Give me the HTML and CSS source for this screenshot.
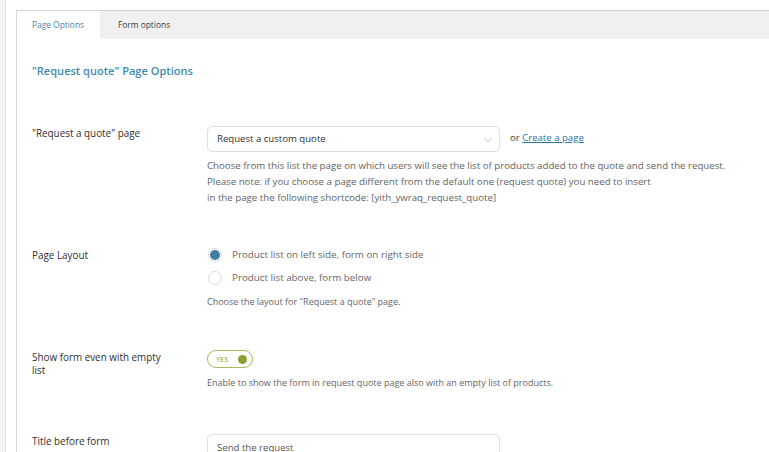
FILE: index.html
```html
<!DOCTYPE html>
<html>
<head>
<meta charset="utf-8">
<link rel="stylesheet" href="styles.css">
</head>
<body>
<div class="page">
  <div class="edge"></div>
  <div class="wrap">
    <div class="panel">
      <div class="tabs">
        <div class="tab active">Page Options</div>
        <div class="tab">Form options</div>
      </div>
      <div class="content">
        <h2 class="title">"Request quote" Page Options</h2>

        <div class="row row-select">
          <div class="label">"Request a quote" page</div>
          <div class="field">
            <div class="inline">
              <div class="select">
                <span>Request a custom quote</span>
                <svg class="chev" width="10" height="6" viewBox="0 0 10 6"><path d="M1 1 L5 5 L9 1" fill="none" stroke="#c8c8c8" stroke-width="1"/></svg>
              </div>
              <span class="or">or <a href="#">Create a page</a></span>
            </div>
            <p class="desc">Choose from this list the page on which users will see the list of products added to the quote and send the request.<br>Please note: if you choose a page different from the default one (request quote) you need to insert<br>in the page the following shortcode: [yith_ywraq_request_quote]</p>
          </div>
        </div>

        <div class="row row-layout">
          <div class="label">Page Layout</div>
          <div class="field">
            <div class="radio-item"><span class="radio checked"></span><span>Product list on left side, form on right side</span></div>
            <div class="radio-item"><span class="radio"></span><span>Product list above, form below</span></div>
            <p class="desc small">Choose the layout for "Request a quote" page.</p>
          </div>
        </div>

        <div class="row row-toggle">
          <div class="label narrow">Show form even with empty list</div>
          <div class="field">
            <div class="toggle"><span class="yes">YES</span><span class="knob"></span></div>
            <p class="desc small toggle-desc">Enable to show the form in request quote page also with an empty list of products.</p>
          </div>
        </div>

        <div class="row row-input">
          <div class="label">Title before form</div>
          <div class="field">
            <div class="input">Send the request</div>
          </div>
        </div>
      </div>
    </div>
  </div>
</div>
</body>
</html>
```

FILE: styles.css
```css
html, body {
  margin: 0;
  padding: 0;
  background: #ffffff;
  overflow: hidden;
}
body {
  font-family: "Open Sans", "Noto Sans", sans-serif;
  color: #3c3c3c;
  width: 769px;
  height: 452px;
}
.page {
  display: flex;
  height: 452px;
  overflow: hidden;
}
.edge {
  width: 5px;
  flex: none;
  background: #f5f5f5;
  border-right: 1px solid #e3e3e3;
}
.wrap {
  flex: 1;
  padding: 10px 0 0 10px;
  min-width: 0;
  overflow: hidden;
}
.panel {
  width: 820px;
  border-top: 1px solid #d2d2d2;
  border-left: 1px solid #d9d9d9;
  background: #fff;
}
.tabs {
  display: flex;
  background: #f0f0f0;
  height: 28px;
}
.tab {
  font-size: 8.4px;
  padding: 0 15px;
  line-height: 28px;
  color: #3a3a3a;
}
.tab.active {
  background: #fff;
  color: #4a86a8;
  width: 53px;
  margin-right: 3px;
}
.content {
  padding: 0 0 0 15px;
}
.title {
  margin: 23px 0 0 0;
  font-size: 11.05px;
  font-weight: 600;
  color: #3f8bae;
  line-height: 18px;
}
.row {
  display: flex;
}
.label {
  width: 175px;
  flex: none;
  font-size: 9.9px;
  color: #2f2f2f;
}
.label.narrow {
  width: 140px;
  margin-right: 35px;
  line-height: 13px;
}
.field {
  flex: 1;
}
.row-select {
  margin-top: 46px;
}
.inline {
  display: flex;
  align-items: center;
}
.select {
  width: 276px;
  height: 24px;
  border: 1px solid #dedede;
  border-radius: 5px;
  display: flex;
  align-items: center;
  justify-content: space-between;
  padding: 0 6px 0 9px;
  font-size: 9.6px;
  color: #333;
}
.select span { line-height: 24px; }
.chev { margin-top: 2px; }
.or {
  margin-left: 10px;
  margin-top: -3px;
  font-size: 9.6px;
  color: #444;
}
.or a {
  color: #2a74a8;
  text-decoration: underline;
}
.desc {
  margin: 6px 0 0 0;
  font-size: 9.7px;
  line-height: 16px;
  color: #646464;
}
.desc.small {
  font-size: 9px;
  margin-top: 5px;
}
.desc.toggle-desc {
  margin-top: 7px;
}
.row-layout {
  margin-top: 37px;
}
.row-layout .label { padding-top: 5px; }
.radio-item {
  display: flex;
  align-items: center;
  height: 23px;
  font-size: 9.8px;
  color: #666;
}
.radio {
  width: 14px;
  height: 14px;
  border: 1px solid #dcdcdc;
  border-radius: 50%;
  margin: 0 10px 0 1px;
  box-sizing: border-box;
  background: #fff;
  display: flex;
  align-items: center;
  justify-content: center;
}
.radio.checked::after {
  content: "";
  width: 10px;
  height: 10px;
  border-radius: 50%;
  background: #3e7fa3;
}
.row-toggle {
  margin-top: 39px;
}
.row-toggle .label { padding-top: 2px; }
.toggle {
  height: 16px;
  border: 1px solid #a9b85e;
  border-radius: 10px;
  display: flex;
  align-items: center;
  justify-content: space-between;
  padding: 0 5px 0 8px;
  width: 31px;
  margin-top: 1px;
}
.yes {
  font-size: 7px;
  color: #86934a;
  letter-spacing: 0.2px;
}
.knob {
  width: 9px;
  height: 9px;
  border-radius: 50%;
  background: #86a135;
}
.row-input {
  margin-top: 43px;
}
.input {
  width: 282px;
  height: 26px;
  border: 1px solid #dedede;
  border-radius: 5px;
  padding: 0 0 0 9px;
  font-size: 9.6px;
  line-height: 26px;
  color: #555;
  margin-top: 0;
}
```
